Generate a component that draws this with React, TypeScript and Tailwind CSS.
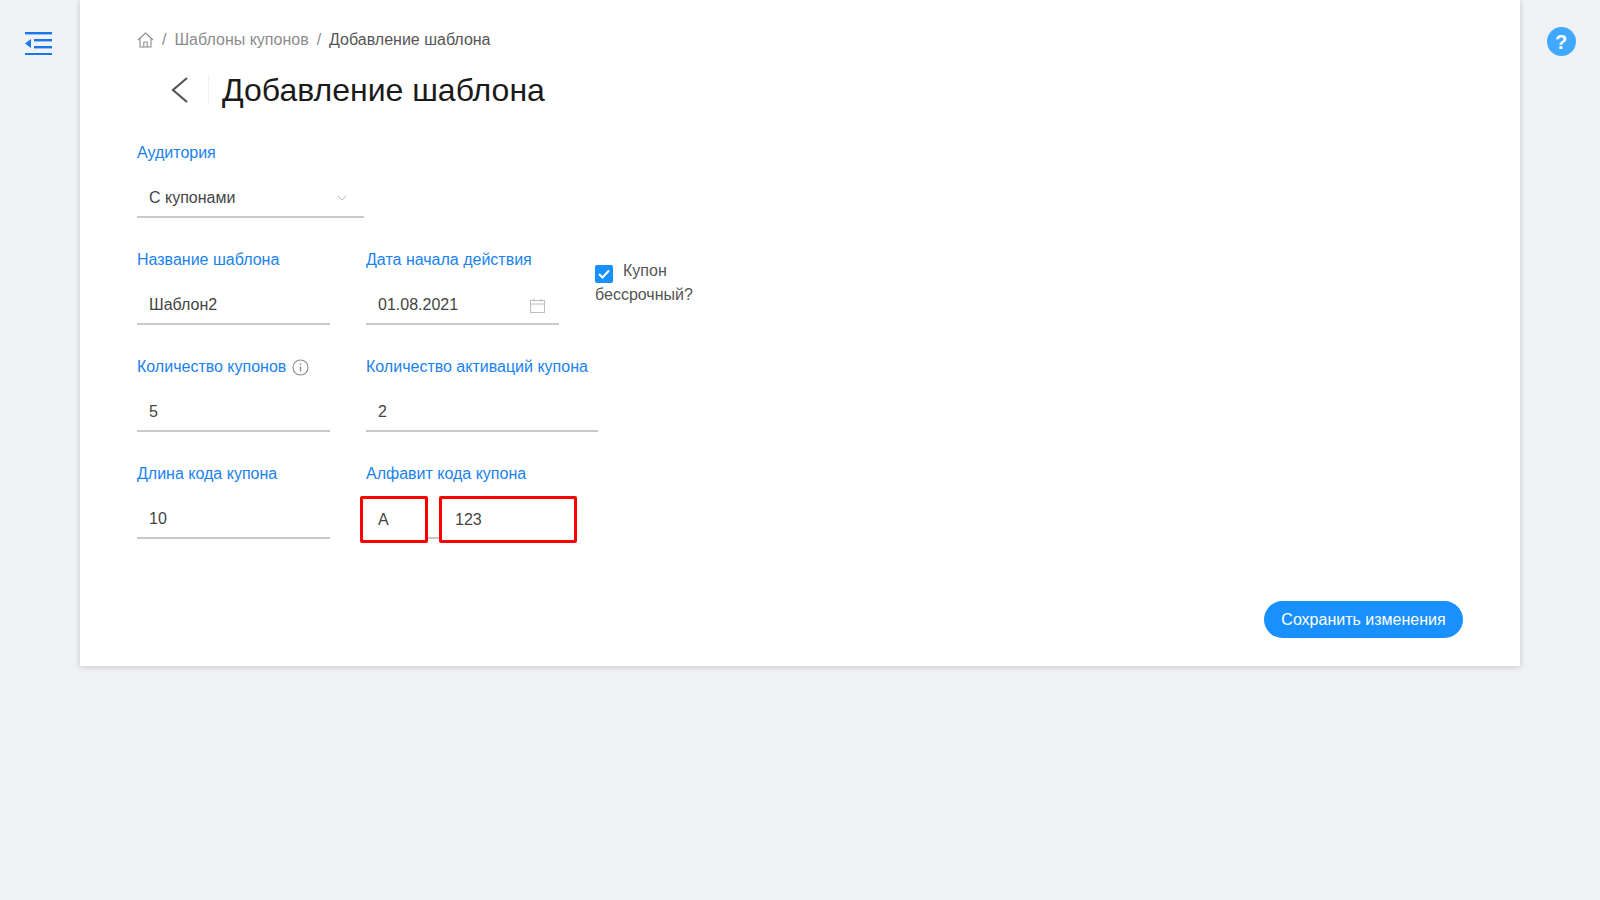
import { ChevronDown } from "lucide-react";

const font = { fontFamily: '"Liberation Sans", Arial, sans-serif' };

const Field = ({
  label,
  value,
  width,
  icon,
  labelIcon,
}: {
  label: string;
  value: string;
  width: string;
  icon?: React.ReactNode;
  labelIcon?: React.ReactNode;
}) => (
  <div className={`flex flex-col ${width}`}>
    <div className="flex h-5 items-center gap-[6px] text-base leading-5 text-[#1a82f0]">
      {label}
      {labelIcon}
    </div>
    <div className="mt-[17px] flex h-[38px] items-center justify-between border-b-2 border-[#c8c8c8] pl-3 pr-[14px] text-base text-[#444]">
      <span>{value}</span>
      {icon}
    </div>
  </div>
);

const MenuIcon = () => (
  <svg width="28" height="24" viewBox="0 0 28 24" fill="#1677ee">
    <rect x="0" y="1" width="27" height="2.4" />
    <rect x="9" y="8" width="18" height="2.4" />
    <rect x="9" y="15" width="18" height="2.4" />
    <rect x="0" y="22" width="27" height="2" />
    <path d="M0 12.5 L6 8 V17 Z" />
  </svg>
);

const HomeIcon = () => (
  <svg width="17" height="16" viewBox="0 0 17 16" fill="none" stroke="#8c8c8c" strokeWidth="1.1">
    <path d="M1 8 L8.5 1 L16 8" />
    <path d="M3 6.5 V15 H14 V6.5" />
    <path d="M6.8 15 V10 H10.2 V15" />
  </svg>
);

const CalendarIcon = () => (
  <svg width="15" height="15" viewBox="0 0 15 15" fill="none" stroke="#bdbdbd" strokeWidth="1">
    <rect x="0.5" y="2.5" width="14" height="12" />
    <path d="M0.5 6 H14.5 M4 0.5 V3.5 M11 0.5 V3.5" />
  </svg>
);

const InfoIcon = () => (
  <svg width="17" height="17" viewBox="0 0 17 17" fill="none" stroke="#8c8c8c" strokeWidth="1.1">
    <circle cx="8.5" cy="8.5" r="7.5" />
    <path d="M8.5 7.5 V12.5" strokeWidth="1.4" />
    <path d="M8.5 4.5 V6" strokeWidth="1.4" />
  </svg>
);

export default function App() {
  return (
    <div className="flex min-h-[900px] items-start bg-[#f0f2f5]" style={font}>
      <div className="flex w-20 justify-center pt-[31px] pr-[2px]">
        <MenuIcon />
      </div>

      <main className="h-[666px] w-[1440px] bg-white pt-[30px] pl-[57px] pr-[57px] shadow-[0_1px_6px_rgba(0,0,0,0.2)]">
        {/* Breadcrumb */}
        <nav className="flex h-[19px] items-center text-base text-[#8c8c8c]">
          <HomeIcon />
          <span className="mx-2">/</span>
          <span>Шаблоны купонов</span>
          <span className="mx-2">/</span>
          <span className="text-[#555]">Добавление шаблона</span>
        </nav>

        {/* Title */}
        <div className="mt-[25px] flex h-[32px] items-center">
          <svg width="20" height="26" viewBox="0 0 20 26" fill="none" stroke="#555" strokeWidth="2.2" className="ml-[33px]">
            <path d="M17 1 L3 13 L17 25" />
          </svg>
          <div className="ml-[18px] h-[30px] w-px bg-[#f0f0f0]" />
          <h1 className="ml-[13px] text-[32px] leading-none text-[#1a1a1a]">Добавление шаблона</h1>
        </div>

        {/* Form */}
        <div className="mt-[37px] flex flex-col gap-[32px]">
          <Field
            label="Аудитория"
            value="С купонами"
            width="w-[227px]"
            icon={<ChevronDown size={16} strokeWidth={1} className="text-[#999]" />}
          />

          <div className="flex items-start gap-9">
            <Field label="Название шаблона" value="Шаблон2" width="w-[193px]" />
            <Field label="Дата начала действия" value="01.08.2021" width="w-[193px]" icon={<CalendarIcon />} />
            <div className="w-[110px] pt-[9px] text-base leading-6 text-[#555]">
              <span className="mr-[10px] inline-flex h-[18px] w-[18px] items-center justify-center rounded-[2px] bg-[#1890ff] align-[-3px]">
                <svg width="12" height="10" viewBox="0 0 12 10" fill="none" stroke="white" strokeWidth="2">
                  <path d="M1 5 L4.5 8.5 L11 1.5" />
                </svg>
              </span>
              Купон бессрочный?
            </div>
          </div>

          <div className="flex items-start gap-9">
            <Field label="Количество купонов" value="5" width="w-[193px]" labelIcon={<InfoIcon />} />
            <Field label="Количество активаций купона" value="2" width="w-[232px]" />
          </div>

          <div className="flex items-start gap-9">
            <Field label="Длина кода купона" value="10" width="w-[193px]" />
            <div className="flex w-[232px] flex-col">
              <div className="h-5 text-base leading-5 text-[#1a82f0]">Алфавит кода купона</div>
              <div className="relative mt-[17px] h-[38px] text-base text-[#444]">
                <div className="absolute -left-[6px] -top-[5px] flex h-[47px] w-[68px] items-center rounded-[2px] border-[3px] border-[#ff0000] pl-[15px]">
                  А
                </div>
                <div className="absolute left-[73px] -top-[5px] flex h-[47px] w-[138px] items-center rounded-[2px] border-[3px] border-[#ff0000] pl-[13px]">
                  123
                </div>
                <div className="absolute left-[62px] top-[36px] h-[2px] w-[11px] bg-[#c8c8c8]" />
              </div>
            </div>
          </div>
        </div>

        <div className="mt-[62px] flex justify-end">
          <button className="h-[37px] w-[199px] rounded-full bg-[#1890ff] text-base text-white">
            Сохранить изменения
          </button>
        </div>
      </main>

      <div className="flex w-20 justify-center pt-[27px] pl-[2px]">
        <div className="flex h-[29px] w-[29px] items-center justify-center rounded-full bg-[#40a9ff] text-[20px] font-bold text-white">
          ?
        </div>
      </div>
    </div>
  );
}
